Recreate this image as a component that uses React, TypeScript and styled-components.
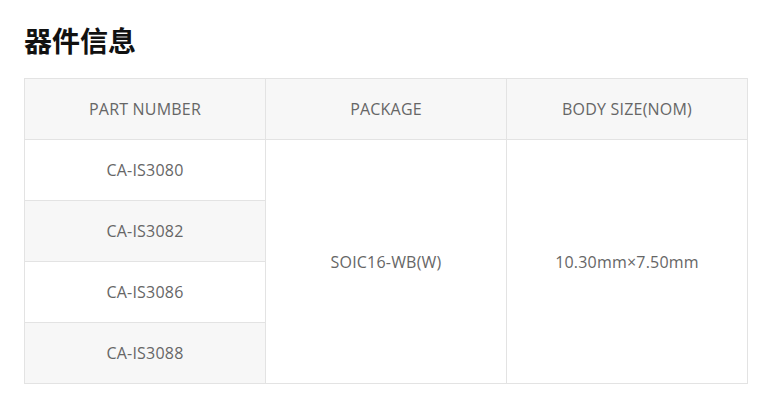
import React from "react";
import styled, { createGlobalStyle } from "styled-components";

const GlobalStyle = createGlobalStyle`
  body {
    margin: 0;
    background: #ffffff;
    font-family: "Open Sans", "Noto Sans CJK SC", sans-serif;
  }
`;

const Page = styled.div`
  padding: 20px 28px 0 24px;
`;

const Title = styled.h2`
  margin: 0 0 18px;
  font-family: "Noto Sans CJK SC", sans-serif;
  font-weight: 700;
  font-size: 28px;
  line-height: 40px;
  color: #111;
`;

const Table = styled.table`
  width: 724px;
  border-collapse: collapse;
  table-layout: fixed;
`;

const Cell = styled.td<{ $shade?: boolean }>`
  height: 60px;
  padding: 0;
  border: 1px solid #e3e3e3;
  text-align: center;
  vertical-align: middle;
  font-size: 16px;
  font-weight: 400;
  letter-spacing: 0.2px;
  color: #666;
  background: ${(p) => (p.$shade ? "#f7f7f7" : "#ffffff")};
`;

const parts = ["CA-IS3080", "CA-IS3082", "CA-IS3086", "CA-IS3088"];

export default function App() {
  return (
    <Page>
      <GlobalStyle />
      <Title>器件信息</Title>
      <Table>
        <thead>
          <tr>
            <Cell as="th" $shade>PART NUMBER</Cell>
            <Cell as="th" $shade>PACKAGE</Cell>
            <Cell as="th" $shade>BODY SIZE(NOM)</Cell>
          </tr>
        </thead>
        <tbody>
          {parts.map((part, i) => (
            <tr key={part}>
              <Cell $shade={i % 2 === 1}>{part}</Cell>
              {i === 0 && (
                <>
                  <Cell rowSpan={4}>SOIC16-WB(W)</Cell>
                  <Cell rowSpan={4}>10.30mm×7.50mm</Cell>
                </>
              )}
            </tr>
          ))}
        </tbody>
      </Table>
    </Page>
  );
}
